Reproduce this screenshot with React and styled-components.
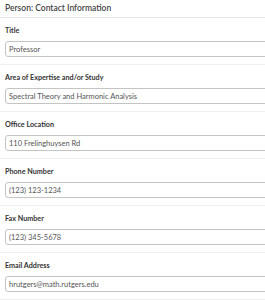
import React from 'react';
import styled, { createGlobalStyle } from 'styled-components';

const GlobalStyle = createGlobalStyle`
	body {
		margin: 0;
		background: #fff;
		font-family: 'Lato', 'Open Sans', sans-serif;
	}
`;

const fields = [
	{ label: 'Title', value: 'Professor' },
	{ label: 'Area of Expertise and/or Study', value: 'Spectral Theory and Harmonic Analysis' },
	{ label: 'Office Location', value: '110 Frelinghuysen Rd' },
	{ label: 'Phone Number', value: '(123) 123-1234' },
	{ label: 'Fax Number', value: '(123) 345-5678' },
	{ label: 'Email Address', value: 'hrutgers@math.rutgers.edu' },
];

function App() {
	return (
		<>
			<GlobalStyle />
			<Panel>
				<Header>Person: Contact Information</Header>
				{fields.map((f) => (
					<Group key={f.label}>
						<Label>{f.label}</Label>
						<Input readOnly value={f.value} />
					</Group>
				))}
			</Panel>
		</>
	);
}

const Panel = styled.div`
	width: 100%;
	overflow: hidden;
`;

const Header = styled.div`
	height: 17px;
	line-height: 16px;
	padding-left: 5px;
	font-size: 8.5px;
	font-weight: 600;
	color: #444;
	border-bottom: 1px solid #e6e6e6;
`;

const Group = styled.div`
	padding: 8px 0 7px 5px;
	border-bottom: 1px solid #f0f0f0;
`;

const Label = styled.div`
	font-size: 7.2px;
	font-weight: 700;
	color: #333;
	line-height: 10px;
	margin-bottom: 5px;
`;

const Input = styled.input`
	display: block;
	box-sizing: border-box;
	width: calc(100% + 20px);
	height: 16px;
	padding: 0 3px;
	font-family: inherit;
	font-size: 7.5px;
	color: #555;
	border: 1px solid #c4c4c4;
	border-radius: 3px;
	outline: none;
	background: #fff;
`;

export default App;
